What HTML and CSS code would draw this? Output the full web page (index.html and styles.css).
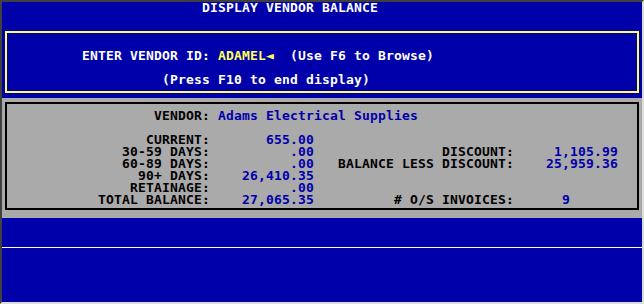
FILE: index.html
```html
<!DOCTYPE html>
<html lang="en">
<head>
  <meta charset="UTF-8">
  <meta name="viewport" content="width=device-width, initial-scale=1">
  <title>Display Vendor Balance</title>
  <link rel="stylesheet" href="styles.css">
</head>
<body>

<div class="screen">
  <div class="title">DISPLAY VENDOR BALANCE</div>

  <div class="entry-box">
    <div class="prompt">ENTER VENDOR ID: <span class="input">ADAMEL&#9668;</span>  (Use F6 to Browse)</div>
    <div class="hint">(Press F10 to end display)</div>
  </div>

  <div class="panel">
    <div class="balance-box">
      <div class="vendor-row">
        <span class="label">VENDOR:</span>
        <span class="vendor-name">Adams Electrical Supplies</span>
      </div>

      <div class="balances">
        <span class="label">CURRENT:</span>
        <span class="amount">655.00</span>
        <span class="label"></span>
        <span class="amount"></span>

        <span class="label">30-59 DAYS:</span>
        <span class="amount">.00</span>
        <span class="label">DISCOUNT:</span>
        <span class="amount">1,105.99</span>

        <span class="label">60-89 DAYS:</span>
        <span class="amount">.00</span>
        <span class="label">BALANCE LESS DISCOUNT:</span>
        <span class="amount">25,959.36</span>

        <span class="label">90+ DAYS:</span>
        <span class="amount">26,410.35</span>
        <span class="label"></span>
        <span class="amount"></span>

        <span class="label">RETAINAGE:</span>
        <span class="amount">.00</span>
        <span class="label"></span>
        <span class="amount"></span>

        <span class="label">TOTAL BALANCE:</span>
        <span class="amount">27,065.35</span>
        <span class="label"># O/S INVOICES:</span>
        <span class="amount count">9</span>
      </div>
    </div>
  </div>

  <div class="footer">
    <div class="rule"></div>
  </div>
</div>

</body>
</html>
```

FILE: styles.css
```css
* { margin: 0; padding: 0; box-sizing: border-box; }
body {
  background: #dcdcdc;
  font-family: 'DejaVu Sans Mono', 'Liberation Mono', monospace;
  font-size: 13px;
  font-weight: bold;
  letter-spacing: 0.174px;
  line-height: 12px;
}
/* one text cell = 8px wide, 12px tall */
.screen {
  width: 644px;
  height: 304px;
  background: #0000aa;
  border-left: 2px solid #404040;
  border-top: 2px solid #404040;
  border-right: 2px solid #dcdcdc;
  border-bottom: 2px solid #dcdcdc;
}
.title {
  height: 24px;
  padding-left: 200px;
  color: #ffffff;
}
.entry-box {
  height: 62px;
  margin: 5px 3px 0 3px;
  border: 2px solid #ffff55;
  padding: 17px 0 5px 75px;
  color: #ffffff;
}
.prompt {
  white-space: pre;
  margin-bottom: 12px;
}
.prompt .input {
  color: #ffff55;
}
.hint {
  padding-left: 80px;
}
.panel {
  height: 120px;
  margin-top: 5px;
  background: #aaaaaa;
  padding: 4px 3px 8px 3px;
}
.balance-box {
  height: 108px;
  border: 2px solid #000000;
  padding: 6px 0 2px 0;
}
.label {
  color: #000000;
  text-align: right;
}
.amount {
  color: #0000aa;
  text-align: right;
}
.vendor-row {
  display: flex;
  margin-bottom: 12px;
}
.vendor-row .label {
  width: 203px;
}
.vendor-name {
  margin-left: 8px;
  color: #0000aa;
}
.balances {
  display: grid;
  grid-template-columns: 203px 104px 200px 104px;
  grid-auto-rows: 12px;
}
.amount.count {
  padding-right: 48px;
}
.footer {
  height: 84px;
}
.rule {
  height: 30px;
  border-bottom: 1px solid #ffffff;
}
```
